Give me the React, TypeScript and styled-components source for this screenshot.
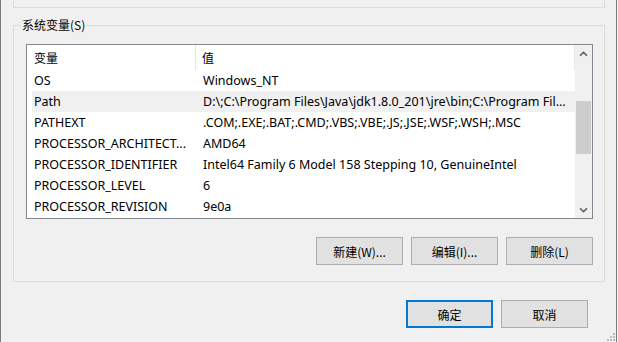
import styled, { createGlobalStyle } from 'styled-components';

const GlobalStyle = createGlobalStyle`
  html, body {
    margin: 0;
    padding: 0;
    background: #f0f0f0;
  }
  body {
    font-family: "Noto Sans", "Noto Sans CJK SC", sans-serif;
    font-size: 12px;
    color: #000;
  }
`;

const Window = styled.div`
  position: relative;
  box-sizing: border-box;
  width: 617px;
  height: 342px;
  padding: 0 11px 0 12px;
  border-left: 1px solid #7a7a7a;
  border-right: 1px solid #7a7a7a;
  background: #f0f0f0;
  overflow: hidden;
`;

const TopGroupEdge = styled.div`
  height: 7px;
  border: 1px solid #dcdcdc;
  border-top: none;
`;

const GroupBox = styled.div`
  position: relative;
  margin-top: 17px;
  padding: 18px 11px 16px 12px;
  border: 1px solid #dcdcdc;
`;

const Legend = styled.span`
  position: absolute;
  top: -8px;
  left: 7px;
  padding: 0 1px;
  line-height: 14px;
  background: #f0f0f0;
  font-family: "Noto Sans CJK SC", "Noto Sans", sans-serif;
`;

const ListBox = styled.div`
  display: flex;
  box-sizing: border-box;
  height: 175px;
  border: 1px solid #828790;
  background: #fff;
`;

const Table = styled.div`
  flex: 1;
  min-width: 0;
  overflow: hidden;
`;

const HeaderRow = styled.div`
  display: flex;
  height: 25px;
  margin-left: 5px;
  font-family: "Noto Sans CJK SC", "Noto Sans", sans-serif;
`;

const HeaderCell = styled.div<{ $width?: number }>`
  box-sizing: border-box;
  ${({ $width }) => ($width ? `width: ${$width}px;` : 'flex: 1;')}
  padding-left: ${({ $width }) => ($width ? 2 : 6)}px;
  line-height: 25px;
  border-right: 1px solid #e5e5e5;
`;

const Row = styled.div<{ $selected?: boolean }>`
  display: flex;
  height: 21px;
  margin-left: 5px;
  line-height: 21px;
  font-size: 12.5px;
  background: ${({ $selected }) => ($selected ? '#f0f0f0' : 'transparent')};
`;

const NameCell = styled.div`
  box-sizing: border-box;
  width: 164px;
  padding-left: 2px;
  white-space: nowrap;
  overflow: hidden;
`;

const ValueCell = styled.div`
  flex: 1;
  padding-left: 7px;
  white-space: nowrap;
  overflow: hidden;
`;

const ScrollBar = styled.div`
  display: flex;
  flex-direction: column;
  width: 17px;
  background: #f0f0f0;
`;

const ArrowButton = styled.div`
  display: flex;
  align-items: center;
  justify-content: center;
  height: 17px;
  color: #606060;
`;

const Track = styled.div`
  flex: 1;
  padding: 0 1px;
`;

const Thumb = styled.div<{ $offset: number; $size: number }>`
  margin-top: ${({ $offset }) => $offset}px;
  height: ${({ $size }) => $size}px;
  background: #cdcdcd;
`;

const ButtonRow = styled.div`
  display: flex;
  justify-content: flex-end;
  gap: 8px;
  margin-top: 18px;
`;

const Button = styled.button<{ $default?: boolean }>`
  box-sizing: border-box;
  width: 87px;
  height: 28px;
  padding: 0;
  background: #e1e1e1;
  border: ${({ $default }) => ($default ? '2px solid #0078d7' : '1px solid #adadad')};
  border-radius: 0;
  font-family: "Noto Sans CJK SC", "Noto Sans", sans-serif;
  font-size: 12px;
  color: #000;
`;

const DialogButtons = styled(ButtonRow)`
  margin-top: 18px;
  padding-right: 17px;
`;

const Grip = styled.svg`
  position: absolute;
  right: 0;
  bottom: 0;
`;

const Chevron = ({ down }: { down?: boolean }) => (
  <svg width="9" height="6" viewBox="0 0 9 6">
    <path
      d={down ? 'M1 1.2 L4.5 4.6 L8 1.2' : 'M1 4.8 L4.5 1.4 L8 4.8'}
      fill="none"
      stroke="currentColor"
      strokeWidth="1.6"
    />
  </svg>
);

const variables = [
  { name: 'OS', value: 'Windows_NT' },
  {
    name: 'Path',
    value: 'D:\\;C:\\Program Files\\Java\\jdk1.8.0_201\\jre\\bin;C:\\Program Fil...',
    selected: true,
  },
  { name: 'PATHEXT', value: '.COM;.EXE;.BAT;.CMD;.VBS;.VBE;.JS;.JSE;.WSF;.WSH;.MSC' },
  { name: 'PROCESSOR_ARCHITECT...', value: 'AMD64' },
  { name: 'PROCESSOR_IDENTIFIER', value: 'Intel64 Family 6 Model 158 Stepping 10, GenuineIntel' },
  { name: 'PROCESSOR_LEVEL', value: '6' },
  { name: 'PROCESSOR_REVISION', value: '9e0a' },
];

export default function App() {
  return (
    <>
      <GlobalStyle />
      <Window>
        <TopGroupEdge />
        <GroupBox>
          <Legend>系统变量(S)</Legend>
          <ListBox>
            <Table>
              <HeaderRow>
                <HeaderCell $width={164}>变量</HeaderCell>
                <HeaderCell>值</HeaderCell>
              </HeaderRow>
              {variables.map((v) => (
                <Row key={v.name} $selected={v.selected}>
                  <NameCell>{v.name}</NameCell>
                  <ValueCell>{v.value}</ValueCell>
                </Row>
              ))}
            </Table>
            <ScrollBar>
              <ArrowButton>
                <Chevron />
              </ArrowButton>
              <Track>
                <Thumb $offset={39} $size={53} />
              </Track>
              <ArrowButton>
                <Chevron down />
              </ArrowButton>
            </ScrollBar>
          </ListBox>
          <ButtonRow>
            <Button>新建(W)...</Button>
            <Button>编辑(I)...</Button>
            <Button>删除(L)</Button>
          </ButtonRow>
        </GroupBox>
        <DialogButtons>
          <Button $default>确定</Button>
          <Button>取消</Button>
        </DialogButtons>
        <Grip width="10" height="10" viewBox="0 0 10 10">
          {[
            [7, 1],
            [7, 4], [4, 4],
            [7, 7], [4, 7], [1, 7],
          ].map(([x, y]) => (
            <rect key={`${x}-${y}`} x={x} y={y} width="2" height="2" fill="#bcbcbc" />
          ))}
        </Grip>
      </Window>
    </>
  );
}
